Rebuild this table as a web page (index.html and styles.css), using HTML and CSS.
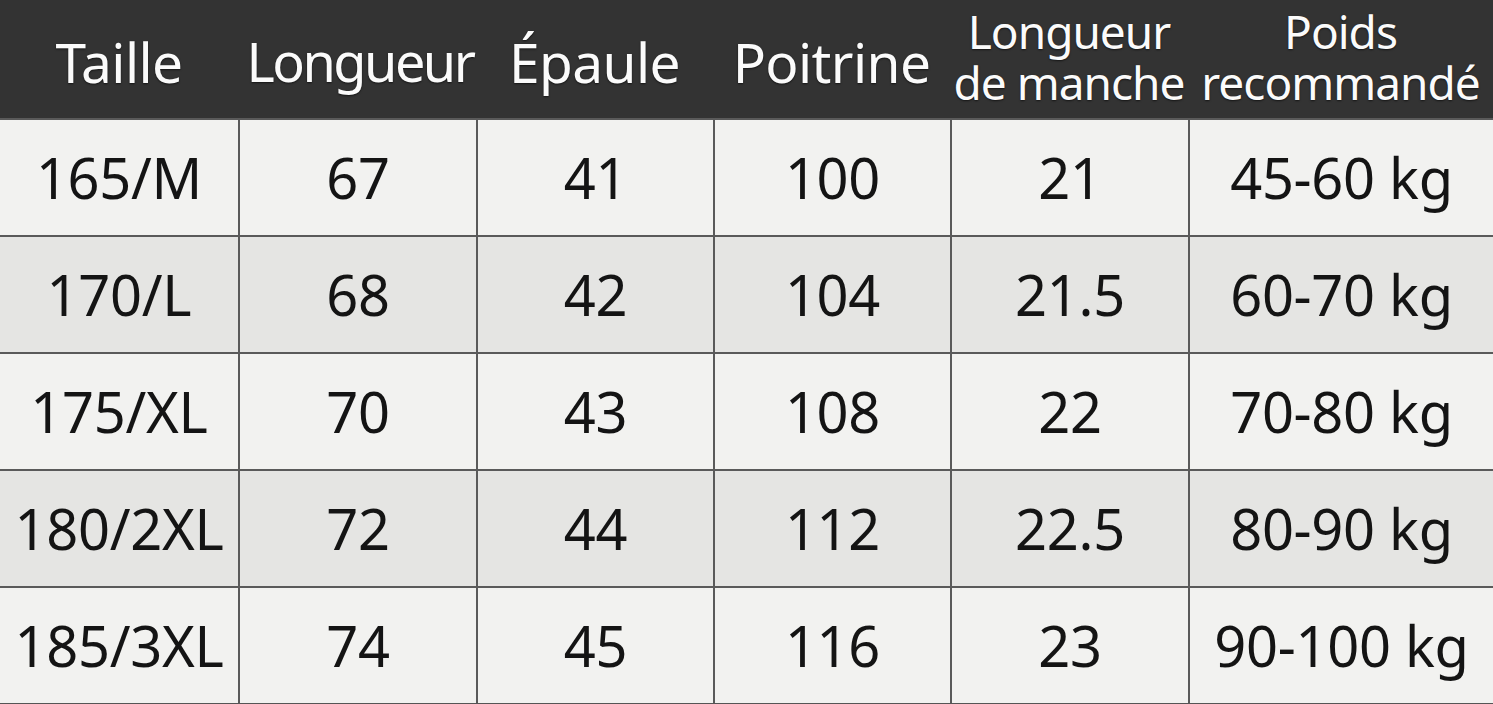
FILE: index.html
```html
<!DOCTYPE html>
<html lang="fr">
<head>
<meta charset="utf-8">
<title>Tableau des tailles</title>
<link rel="stylesheet" href="styles.css">
</head>
<body>
<div class="table">
  <div class="head"><span>Taille</span></div>
  <div class="head tight"><span>Longueur</span></div>
  <div class="head"><span>Épaule</span></div>
  <div class="head"><span>Poitrine</span></div>
  <div class="head two"><span class="line">Longueur</span><span class="line">de manche</span></div>
  <div class="head two"><span class="line">Poids</span><span class="line">recommandé</span></div>

  <div class="cell">165/M</div><div class="cell">67</div><div class="cell">41</div><div class="cell">100</div><div class="cell">21</div><div class="cell">45-60 kg</div>
  <div class="cell alt">170/L</div><div class="cell alt">68</div><div class="cell alt">42</div><div class="cell alt">104</div><div class="cell alt">21.5</div><div class="cell alt">60-70 kg</div>
  <div class="cell">175/XL</div><div class="cell">70</div><div class="cell">43</div><div class="cell">108</div><div class="cell">22</div><div class="cell">70-80 kg</div>
  <div class="cell alt">180/2XL</div><div class="cell alt">72</div><div class="cell alt">44</div><div class="cell alt">112</div><div class="cell alt">22.5</div><div class="cell alt">80-90 kg</div>
  <div class="cell">185/3XL</div><div class="cell">74</div><div class="cell">45</div><div class="cell">116</div><div class="cell">23</div><div class="cell">90-100 kg</div>
</div>
</body>
</html>
```
FILE: styles.css
```css
html, body {
  margin: 0;
  padding: 0;
  background: #f1f1ef;
}
.table {
  width: 1493px;
  height: 704px;
  display: grid;
  grid-template-columns: 238px 238px 237px 237px 238px 305px;
  grid-template-rows: 118px repeat(5, 117px);
  font-family: "Noto Sans", "Open Sans", sans-serif;
  background: #555;
  overflow: hidden;
}
.head {
  background: #333333;
  color: #fbfbfb;
  display: flex;
  flex-direction: column;
  align-items: center;
  justify-content: center;
  text-align: center;
  font-size: 55px;
  letter-spacing: -0.6px;
  text-shadow: 0 1px 2px rgba(0,0,0,0.6);
  box-sizing: border-box;
  padding-top: 4px;
}
.head.tight {
  font-size: 54px;
  letter-spacing: -2.5px;
  padding-left: 6px;
}
.head.two {
  font-size: 46px;
  letter-spacing: -1px;
  white-space: nowrap;
  padding-top: 0;
  padding-bottom: 4px;
}
.head .line {
  display: block;
  line-height: 51px;
}
.cell {
  background: #f2f2f0;
  color: #141414;
  display: flex;
  align-items: center;
  justify-content: center;
  font-size: 56px;
  letter-spacing: -0.3px;
  border-left: 2px solid #5a5a5a;
  border-top: 2px solid #5a5a5a;
  box-sizing: border-box;
  white-space: nowrap;
  padding-bottom: 2px;
}
.cell:nth-child(6n+1) {
  border-left: none;
}
.cell.alt {
  background: #e5e5e3;
}
```
